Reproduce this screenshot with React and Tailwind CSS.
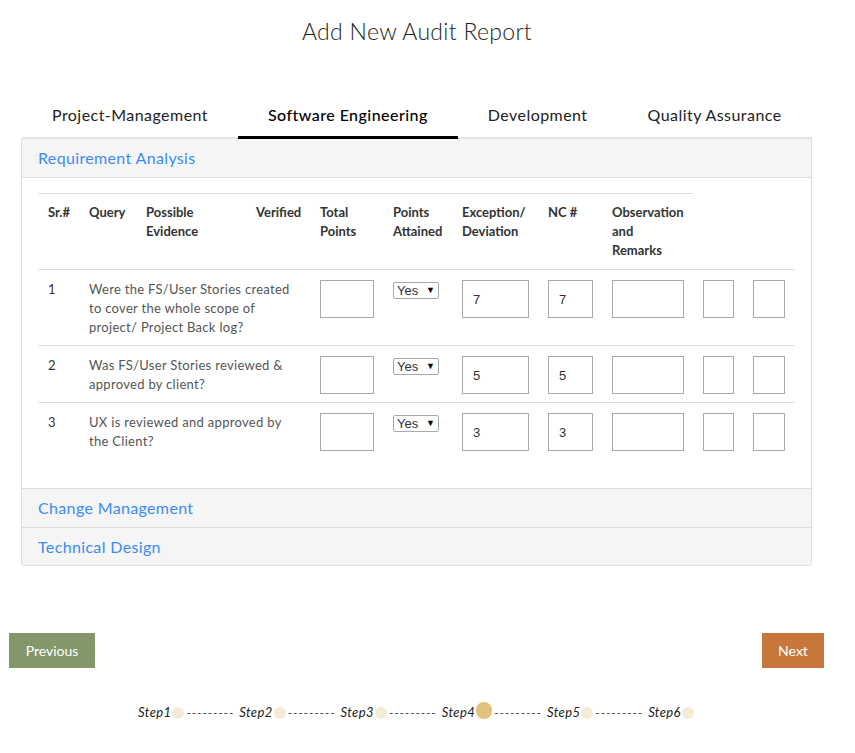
import React, { useState } from 'react';

const rows = [
  { n: '1', q: ['Were the FS/User Stories created', 'to cover the whole scope of', 'project/ Project Back log?'], v: '7' },
  { n: '2', q: ['Was FS/User Stories reviewed &', 'approved by client?'], v: '5' },
  { n: '3', q: ['UX is reviewed and approved by', 'the Client?'], v: '3' },
];

const tabs = ['Project-Management', 'Software Engineering', 'Development', 'Quality Assurance'];
const steps = ['Step1', 'Step2', 'Step3', 'Step4', 'Step5', 'Step6'];

const gridCols = 'grid grid-cols-[41px_57px_110px_64px_73px_69px_86px_64px_91px_50px_50px]';
const box = 'block h-[38px] border border-[#a9a9a9] bg-white px-[10px] text-[13px] text-[#333] outline-none font-["Liberation_Sans",Arial,sans-serif]';

const App = () => {
  const [active, setActive] = useState(1);

  return (
    <div className='min-h-[753px] bg-white font-["Lato",sans-serif] text-[#333]'>
      <div className="w-[790px] ml-[22px]">
        <h1 className="pt-[17px] text-center text-[23px] leading-[28px] tracking-[0.3px] font-light text-[#222]">Add New Audit Report</h1>

        {/* tabs */}
        <div className="mt-[57px] flex border-b-2 border-[#e4e4e4]">
          {tabs.map((t, i) => (
            <button
              key={t}
              onClick={() => setActive(i)}
              className={`-mb-[2px] px-[30px] pb-[10px] pt-[2px] text-[16px] leading-[22px] tracking-[0.45px] border-b-[3px] ${
                i === active ? 'border-black text-black font-medium' : 'border-transparent text-[#222]'
              }`}
            >
              {t}
            </button>
          ))}
        </div>

        {/* panel group */}
        <div className="-ml-px w-[791px] border border-t-0 border-[#dddddd] rounded-b-[4px]">
          <div className="h-[39px] bg-[#f5f5f5] border-b border-[#dddddd] px-[16px] flex items-center">
            <span className="text-[16px] tracking-[0.35px] text-[#3b8cf4]">Requirement Analysis</span>
          </div>

          <div className="px-[16px] pt-[15px] pb-[29px] bg-white">
            {/* header */}
            <div className={`${gridCols} text-[13px] leading-[19px] font-bold text-[#333]`}>
              {[
                ['Sr.#'],
                ['Query'],
                ['Possible', 'Evidence'],
                ['Verified'],
                ['Total', 'Points'],
                ['Points', 'Attained'],
                ['Exception/', 'Deviation'],
                ['NC #'],
                ['Observation', 'and', 'Remarks'],
              ].map((h, i) => (
                <div key={i} className="border-t border-[#dddddd] pl-[10px] pt-[9px] pb-[9px]">
                  {h.map((l) => (
                    <div key={l}>{l}</div>
                  ))}
                </div>
              ))}
            </div>

            {/* body rows */}
            {rows.map((r) => (
              <div key={r.n} className={`${gridCols} border-t border-[#dddddd] text-[13px] leading-[19px] text-[#555]`}>
                <div className="pl-[10px] pt-[10px] pb-[8px] text-[#333]">{r.n}</div>
                <div className="col-span-3 pl-[10px] pt-[10px] pb-[8px] tracking-[0.3px]">
                  {r.q.map((l) => (
                    <div key={l}>{l}</div>
                  ))}
                </div>
                <div className="pl-[10px] pt-[10px]">
                  <input className={`${box} w-[54px]`} />
                </div>
                <div className="pl-[10px] pt-[11px]">
                  <div className="relative w-[46px] h-[17px]">
                    <select className='appearance-none w-[46px] h-[17px] border border-[#a9a9a9] rounded-[2px] bg-white pl-[3px] text-[13px] leading-[15px] text-[#333] font-["Liberation_Sans",Arial,sans-serif]'>
                      <option>Yes</option>
                      <option>No</option>
                    </select>
                    <span className="pointer-events-none absolute right-[4px] top-[1px] text-[9px] leading-[15px] text-black">▼</span>
                  </div>
                </div>
                <div className="pl-[10px] pt-[10px]">
                  <input className={`${box} w-[67px]`} defaultValue={r.v} />
                </div>
                <div className="pl-[10px] pt-[10px]">
                  <input className={`${box} w-[45px]`} defaultValue={r.v} />
                </div>
                <div className="pl-[10px] pt-[10px]">
                  <input className={`${box} w-[72px]`} />
                </div>
                <div className="pl-[10px] pt-[10px]">
                  <input className={`${box} w-[31px]`} />
                </div>
                <div className="pl-[10px] pt-[10px]">
                  <input className={`${box} w-[32px]`} />
                </div>
              </div>
            ))}
          </div>

          <div className="h-[39px] bg-[#f5f5f5] border-t border-[#dddddd] px-[16px] flex items-center">
            <span className="text-[16px] tracking-[0.35px] text-[#3b8cf4]">Change Management</span>
          </div>
          <div className="h-[38px] bg-[#f5f5f5] border-t border-[#dddddd] px-[16px] flex items-center rounded-b-[4px]">
            <span className="text-[16px] tracking-[0.35px] text-[#3b8cf4]">Technical Design</span>
          </div>
        </div>
      </div>

      {/* wizard buttons */}
      <div className="mt-[67px] ml-[9px] w-[815px] flex justify-between">
        <button className="h-[35px] w-[86px] bg-[#84976b] text-white text-[14px]">Previous</button>
        <button className="h-[35px] w-[62px] bg-[#c8773a] text-white text-[14px]">Next</button>
      </div>

      {/* stepper */}
      <div className="mt-[35px] flex items-center justify-center pr-[23px]">
        {steps.map((s, i) => (
          <React.Fragment key={s}>
            <div className="flex items-center">
              <span className="italic text-[13px] tracking-[0.4px] text-[#222]">{s}</span>
              <span
                className={`ml-px rounded-full ${
                  i === 3 ? 'w-[16px] h-[17px] bg-[#e0c27c] -mt-[4px]' : 'w-[12px] h-[12px] bg-[#f5ecd7]'
                }`}
              />
            </div>
            {i < steps.length - 1 && (
              <span className="ml-[2px] mr-[5px] whitespace-nowrap text-[12px] tracking-[0.85px] text-[#444]">---------</span>
            )}
          </React.Fragment>
        ))}
      </div>
    </div>
  );
};

export default App;
